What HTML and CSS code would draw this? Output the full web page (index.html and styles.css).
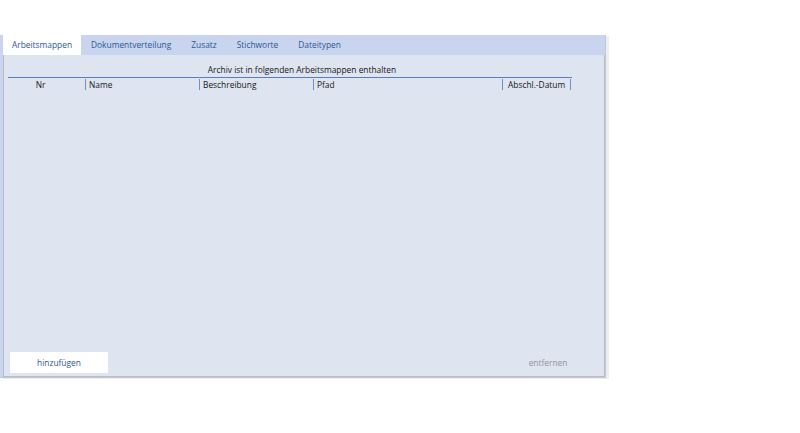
FILE: index.html
```html
<!DOCTYPE html>
<html>
<head>
<meta charset="utf-8">
<link rel="stylesheet" href="styles.css">
</head>
<body>
<div class="frame">
  <div class="tabs">
    <div class="tab active">Arbeitsmappen</div>
    <div class="tab">Dokumentverteilung</div>
    <div class="tab">Zusatz</div>
    <div class="tab">Stichworte</div>
    <div class="tab">Dateitypen</div>
  </div>
  <div class="panel">
    <div class="caption">Archiv ist in folgenden Arbeitsmappen enthalten</div>
    <div class="head">
      <div class="col c-nr">Nr</div>
      <div class="col c-name">Name</div>
      <div class="col c-desc">Beschreibung</div>
      <div class="col c-path">Pfad</div>
      <div class="col c-date">Abschl.-Datum</div>
    </div>
    <div class="body"></div>
    <div class="footer">
      <div class="btn add">hinzufügen</div>
      <div class="btn remove">entfernen</div>
    </div>
  </div>
</div>
</body>
</html>
```
FILE: styles.css
```css
html, body { margin: 0; padding: 0; background: #fff; }
body { width: 800px; height: 433px; font-family: "Open Sans", "Noto Sans", sans-serif; font-size: 8.4px; color: #151515; }
.frame {
  margin-top: 35px;
  width: 605px;
  height: 342px;
  background: #c9d4ee;
  border-right: 1px solid #c4c8d0;
  border-bottom: 1px solid #c4c8d0;
  box-shadow: 3px 1px 0 #eceef2;
  display: flex;
  flex-direction: column;
}
.tabs { display: flex; height: 20px; padding-left: 3px; }
.tab { color: #2b5797; line-height: 20px; margin-right: 20px; }
.tab.active { background: #fff; width: 78px; text-align: center; margin-right: 10px; }
.panel {
  flex: 1;
  margin: 0 0 0 3px;
  background: #dfe5f0;
  border-left: 1px solid #b8bcc6;
  border-bottom: 1px solid #b8bcc6;
  border-right: 1px solid #b8bcc6;
  display: flex;
  flex-direction: column;
  padding: 0 32px 0 4px;
}
.caption { text-align: center; height: 14px; line-height: 14px; margin-top: 8px; padding-left: 24px; }
.head { display: flex; border-top: 1px solid #5580c0; height: 14px; }
.col { border-right: 1px solid #6d90c8; height: 11px; line-height: 11px; margin-top: 1px; padding-left: 3px; }
.c-nr { width: 65px; text-align: center; padding-left: 0; padding-right: 12px; }
.c-name { width: 110px; }
.c-desc { width: 110px; }
.c-path { width: 185px; }
.c-date { width: 62px; padding-left: 5px; }
.body { flex: 1; }
.footer { display: flex; justify-content: space-between; align-items: flex-end; margin-left: 2px; margin-right: -11px; margin-bottom: 3px; }
.btn { height: 21px; line-height: 21px; text-align: center; }
.add { background: #fff; width: 98px; color: #2b5797; }
.remove { color: #8f939b; width: 70px; }
```
